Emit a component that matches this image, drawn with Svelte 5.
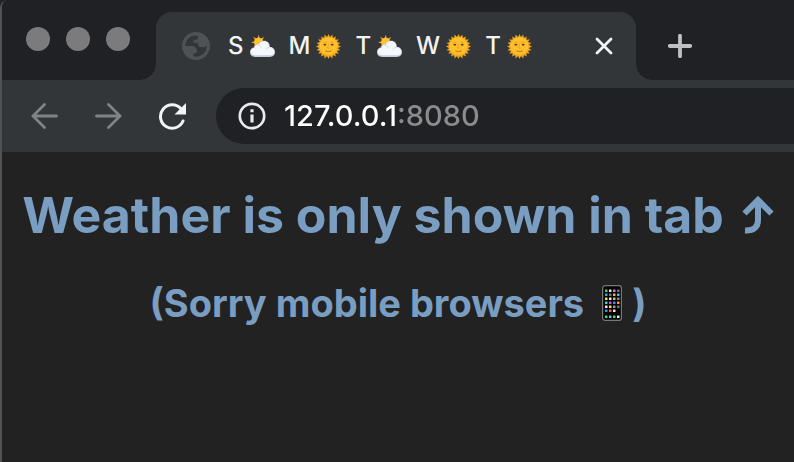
<script>
  const forecast = [
    { day: 'S', sky: 'cloud' },
    { day: 'M', sky: 'sun' },
    { day: 'T', sky: 'cloud' },
    { day: 'W', sky: 'sun' },
    { day: 'T', sky: 'sun' }
  ];
  const rays = Array.from({ length: 20 }, (_, i) => i * 18);
  const smallRays = Array.from({ length: 8 }, (_, i) => i * 45);
  const apps = [
    ['#43d869', '#eeeeee', '#d77bea', '#777777'],
    ['#39a7ef', '#777777', '#d8bb80', '#41c9df'],
    ['#ffd34d', '#eeeeee', '#ffb340', '#8b8b8b'],
    ['#48d5c6', '#c759f0', '#3895f5', '#ff9f23'],
    ['#eeeeee', '#ffdb4d', '#999999', '#777777'],
    ['#299cff', '#ff5b45', '#eeeeee', '#080808'],
    ['#4bdb68', '#46cce9', '#45df72', '#eeeeee']
  ];
  const appTops = [5, 9, 13, 17, 21, 25, 31];
  let address = $state('127.0.0.1:8080');
</script>

<div class="window">
  <header>
    <div class="strip">
      <div class="lights"><i></i><i></i><i></i></div>
      <div class="tab">
        <svg class="globe" viewBox="0 0 28 28" aria-hidden="true">
          <circle cx="14" cy="14" r="14" fill="#4e5256" />
          <path d="M3.2 14C3.2 8 8 3.2 14.5 3.4C16.5 4 16.5 6.8 14.5 7.6C13.5 8 11.5 7.5 11.3 9.2C11.2 11 12.5 10.8 14 10.8C16.5 11 16 12.5 16.6 13.8C17.5 15.3 20 15.5 22 15.2C23.3 15 24 14.2 24.8 13.6C25 20 20 25 14 24.8C12.3 24.8 11.2 24 11.2 22.4C11.5 20.8 14.8 21.8 15 19.5C15.2 16 12.5 14 9.5 14Z" fill="#323639" />
        </svg>
        <div class="title">
          {#each forecast as item}
            <span class="day">
              {item.day}
              {#if item.sky === 'sun'}
                <svg class="sky" viewBox="0 0 24 24" role="img" aria-label="sunny">
                  {#each rays as angle}
                    <path d="M10.4 3.5L12 0L13.6 3.5Z" fill="#f5aa20" transform="rotate({angle} 12 12)" />
                  {/each}
                  <circle cx="12" cy="12" r="9.5" fill="#f5a91c" />
                  <circle cx="12" cy="11.5" r="8.5" fill="#ffc02f" />
                  <path d="M6.5 8.6Q8.5 6.8 10.5 8.4M13.5 8.4Q15.5 6.8 17.5 8.6M12 9L11.2 13.5H13" fill="none" stroke="#eb9c1c" stroke-width=".8" />
                  <ellipse cx="8.5" cy="10.2" rx="1.4" ry=".9" fill="#5b421b" />
                  <ellipse cx="15.5" cy="10.2" rx="1.4" ry=".9" fill="#5b421b" />
                  <path d="M9 16Q12 17.5 15 16" fill="none" stroke="#d77c0e" stroke-width="1" />
                </svg>
              {:else}
                <svg class="sky" viewBox="0 0 24 24" role="img" aria-label="partly cloudy">
                  {#each smallRays as angle}
                    <path d="M7.2 4L8.3 0.8L9.4 4Z" fill="#f4aa22" transform="rotate({angle} 8.3 8)" />
                  {/each}
                  <circle cx="8.3" cy="8" r="4.4" fill="#ffc230" />
                  <path d="M5 22C2 22 0 20 0 17.5C0 15 2 13 4 13C4 11 6 9.5 8 10C9 7.5 11 6.5 13.5 6.5C17 6.5 19.3 9 19 12.5C22 12.5 24 14.5 24 17.5C24 20 22 22 19 22Z" fill="#c5cfdb" />
                  <path d="M5 20.5C2.5 20.5 .8 19 .8 17C.8 15 2 13.5 4.5 13.5C5 11 6.5 10 8.5 10.5C9 8 11 7 13.5 7C16.5 7 18.8 9.5 18.3 12.8C21.5 12.8 23.3 14.5 23.3 17C23.3 19.5 21.5 20.5 19 20.5Z" fill="#f4f7fb" />
                  <path d="M8 11Q10.5 11 11 13M18.3 12.8Q16 13 15 15" fill="none" stroke="#cfd8e3" stroke-width=".8" />
                </svg>
              {/if}
            </span>
          {/each}
        </div>
        <button class="close" aria-label="Close tab">
          <svg viewBox="0 0 20 20" width="20" height="20"><path d="M3 3L17 17M17 3L3 17" stroke="#f1f3f4" stroke-width="2.8" stroke-linecap="round" /></svg>
        </button>
      </div>
      <button class="new" aria-label="New tab">
        <svg viewBox="0 0 24 24" width="24" height="24"><path d="M12 1.8V22.2M1.8 12H22.2" stroke="#bdc1c6" stroke-width="3.8" stroke-linecap="round" /></svg>
      </button>
    </div>
    <div class="toolbar">
      <nav>
        <button aria-label="Back"><svg viewBox="0 0 28 28"><path d="M26.5 14H3M14.5 2.5L3 14L14.5 25.5" stroke="#7f8384" stroke-width="2.8" stroke-linecap="round" /></svg></button>
        <button aria-label="Forward"><svg viewBox="0 0 28 28"><path d="M2.5 14H26M14.5 2.5L26 14L14.5 25.5" stroke="#7f8384" stroke-width="2.8" stroke-linecap="round" /></svg></button>
        <button aria-label="Reload"><svg viewBox="0 0 28 28"><path d="M25 19A11.7 11.7 0 1 1 23 6.8" stroke="#f1f3f4" stroke-width="3" stroke-linecap="round" /><path d="M28 1V12.5H16.5Z" fill="#f1f3f4" /></svg></button>
      </nav>
      <div class="omnibox">
        <button aria-label="Site information">
          <svg viewBox="0 0 28 28"><circle cx="14" cy="14" r="12.2" stroke="#e8eaed" stroke-width="2.7" /><path d="M12.4 7.3H15.6V10.3H12.4ZM12.4 12.4H15.6V20.5H12.4Z" fill="#e8eaed" /></svg>
        </button>
        <input aria-label="Address" bind:value={address} spellcheck="false" />
      </div>
    </div>
  </header>
  <main>
    <h1>
      Weather is only shown in tab
      <svg class="up" viewBox="0 0 32 38" role="img" aria-label="up"><path d="M3 34.5C12 35 16 31 16 24V5M2.5 17.5L16 4L29.5 17.5" fill="none" stroke="#7a9ec2" stroke-width="6" /></svg>
    </h1>
    <h2>
      (Sorry mobile browsers
      <svg class="phone" viewBox="0 0 20 36" role="img" aria-label="mobile phone">
        <rect x=".6" y=".6" width="18.8" height="34.8" rx="2.5" fill="#050505" stroke="#777" stroke-width="1.2" />
        {#each apps as row, y}
          {#each row as color, x}
            <rect x={3 + x * 4} y={appTops[y] - 0.5} width="2.5" height="2.5" rx=".5" fill={color} />
          {/each}
        {/each}
      </svg>)
    </h2>
  </main>
</div>

<style>
  :global(body) { margin: 0; background: #222; }
  .window {
    box-sizing: border-box;
    min-height: 100vh;
    border-left: 2px solid #505254;
    border-top-left-radius: 8px;
    background: #222;
    font-family: Inter, "Liberation Sans", sans-serif;
    overflow: hidden;
  }
  button { display: grid; place-items: center; padding: 0; border: 0; background: none; }
  svg { display: block; fill: none; }
  .strip {
    display: flex;
    height: 80px;
    background: #202124;
  }
  .lights { display: flex; gap: 16px; padding: 27px 26px 0 24px; }
  .lights i { width: 24px; height: 24px; border-radius: 50%; background: #7b7b7d; }
  .tab {
    position: relative;
    display: flex;
    align-items: center;
    box-sizing: border-box;
    width: 480px;
    margin-top: 12px;
    padding: 0 20px 0 26px;
    border-radius: 16px 16px 0 0;
    background: #323639;
  }
  .tab::before, .tab::after {
    content: "";
    position: absolute;
    bottom: 0;
    width: 16px;
    height: 16px;
  }
  .tab::before { right: 100%; background: radial-gradient(circle at 0 0, #202124 15.5px, #323639 16px); }
  .tab::after { left: 100%; background: radial-gradient(circle at 100% 0, #202124 15.5px, #323639 16px); }
  .globe { width: 28px; height: 28px; margin-right: 18px; }
  .title { display: flex; flex: 1; gap: 14px; color: #f1f3f4; font-size: 24px; font-weight: 500; line-height: 32px; }
  .day { display: flex; align-items: center; gap: 6px; }
  .sky { width: 25px; height: 25px; }
  .close { width: 24px; height: 24px; }
  .new { width: 32px; height: 32px; margin: 30px 0 0 28px; }
  .toolbar {
    display: flex;
    align-items: center;
    height: 72px;
    padding-left: 28px;
    background: #323639;
    border-bottom: 1px solid #202124;
  }
  nav { display: flex; gap: 36px; margin-right: 30px; }
  nav svg, .omnibox svg { width: 28px; height: 28px; }
  .omnibox {
    display: flex;
    flex: 1;
    align-items: center;
    gap: 18px;
    height: 56px;
    padding-left: 22px;
    border-radius: 28px 0 0 28px;
    background: #202124;
  }
  input {
    flex: 1;
    min-width: 0;
    padding: 0;
    border: 0;
    outline: 0;
    background: linear-gradient(90deg, #fff 114px, #8b8c8e 114px);
    -webkit-background-clip: text;
    background-clip: text;
    color: transparent;
    font: 500 29px/40px Inter, "Liberation Sans", sans-serif;
  }
  main { padding: 32px 16px; color: #7a9ec2; text-align: center; }
  h1, h2 { display: flex; justify-content: center; align-items: center; margin: 0; font-weight: 700; white-space: nowrap; }
  h1 { gap: 18px; font-size: 50px; line-height: 60px; }
  h2 { margin-top: 34px; font-size: 38px; line-height: 48px; }
  .up { width: 32px; height: 38px; }
  .phone { width: 22px; height: 36px; margin: 0 9px 0 17px; }
</style>
